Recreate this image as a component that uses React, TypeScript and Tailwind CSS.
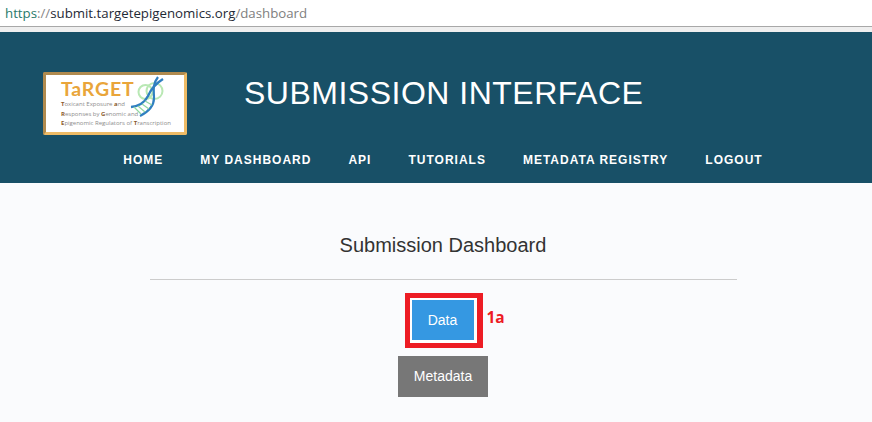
const NAV_ITEMS = ["HOME", "MY DASHBOARD", "API", "TUTORIALS", "METADATA REGISTRY", "LOGOUT"];

function Logo() {
  return (
    <div className="relative h-[63px] w-[144px] shrink-0 rounded-[2px] border-[3px] border-[#eebb66] border-t-[#b08a4e] border-l-[#b08a4e] bg-white">
      <div className="pl-[15px] pt-[5px] font-['Open_Sans',sans-serif] text-[6px] leading-[9.5px] text-[#8c8c8c]">
        <div className="h-[18px] font-['Lato',sans-serif] text-[19.5px] font-bold leading-[18px] tracking-[0.8px] text-[#e9a53a]">TaRGET</div>
        <div className="mt-[2px] whitespace-nowrap">
          <b className="text-[#8a5a2b]">T</b>oxicant Exposure <b className="text-[#8a5a2b]">a</b>nd
        </div>
        <div className="whitespace-nowrap">
          <b className="text-[#8a5a2b]">R</b>esponses by <b className="text-[#8a5a2b]">G</b>enomic and
        </div>
        <div className="whitespace-nowrap">
          <b className="text-[#8a5a2b]">E</b>pigenomic Regulators of <b className="text-[#8a5a2b]">T</b>ranscription
        </div>
      </div>
      <svg className="absolute left-[82px] top-[1px]" width="38" height="42" viewBox="0 0 38 42" fill="none">
        <circle cx="17.5" cy="16" r="7" stroke="#b9e8b4" strokeWidth="2" />
        <circle cx="26.5" cy="15" r="8" stroke="#b9e8b4" strokeWidth="2" />
        <path d="M3 31 C12 30 17 26 20 20 C23 13 27 8 35 3" stroke="#2f7fc1" strokeWidth="2.4" />
        <path d="M12 40 C20 36 26 30 26 22 C26 15 24 9 30 1" stroke="#2f7fc1" strokeWidth="2.2" />
        <path d="M6 31 L13 38 M10 30 L17 36 M14 28 L21 33 M17 25 L24 29" stroke="#8fd6a0" strokeWidth="1.2" />
      </svg>
    </div>
  );
}

export default function App() {
  return (
    <div className="h-[422px] w-[872px] overflow-hidden bg-[#fafbfd] font-['Liberation_Sans',Arial,sans-serif]">
      <div className="h-[27px] border-b border-[#a8a8a8] bg-white pl-[5px] font-['Open_Sans',sans-serif] text-[13.25px] leading-[27px] text-[#1f2a36]">
        <span className="text-[#2a7a6c]">https</span>
        <span className="text-[#888]">://</span>
        submit.targetepigenomics.org
        <span className="text-[#808080]">/dashboard</span>
      </div>
      <div className="h-[5px] bg-[#efefef]" />
      <header className="h-[151px] bg-[#185067]">
        <div className="flex items-start pl-[43px] pt-[40px]">
          <Logo />
          <h1 className="ml-[57px] mt-[3px] text-[32px] font-normal leading-[37px] tracking-[0.5px] text-white">SUBMISSION INTERFACE</h1>
        </div>
        <nav className="mt-[16px] flex justify-center gap-[37px] pl-[14px] text-[12px] font-bold leading-[18px] tracking-[1px] text-white">
          {NAV_ITEMS.map((item) => (
            <span key={item}>{item}</span>
          ))}
        </nav>
      </header>
      <main className="flex flex-col items-center pl-[14px] pt-[51px]">
        <h2 className="text-[20px] font-normal leading-[22px] text-[#333]">Submission Dashboard</h2>
        <div className="mt-[23px] h-px w-[587px] bg-[#cccccc]" />
        <div className="relative ml-[1px] mt-[13px] h-[55px] w-[78px] border-[5px] border-r-[6px] border-[#ed1c24] bg-white pb-[3px] pl-[2px] pr-[3px] pt-[2px]">
          <button className="flex h-full w-full items-center justify-center bg-[#3598e2] text-[14px] text-white">Data</button>
          <span className="absolute left-[77px] top-[10px] font-['Open_Sans',sans-serif] text-[15.5px] font-bold leading-[18px] text-[#ed1c24]">1a</span>
        </div>
        <button className="mt-[8px] flex h-[41px] w-[90px] items-center justify-center bg-[#777777] text-[14px] text-white">Metadata</button>
      </main>
    </div>
  );
}
